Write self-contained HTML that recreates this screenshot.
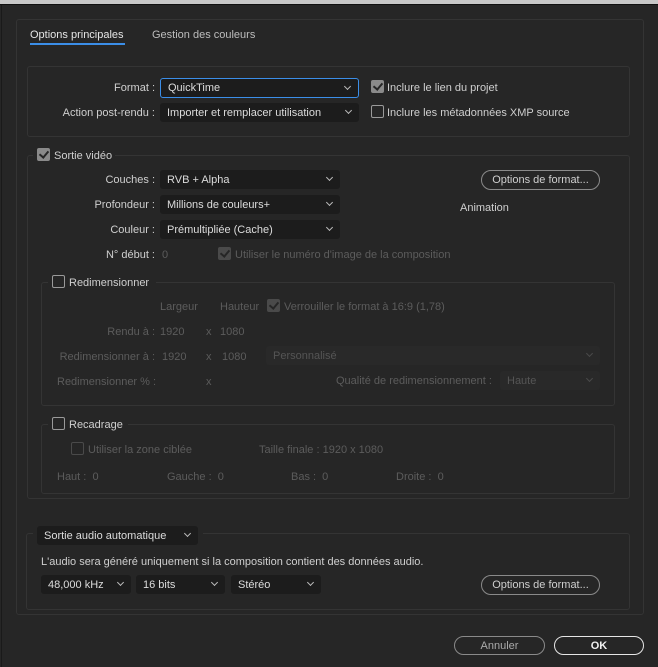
<!DOCTYPE html>
<html><head><meta charset="utf-8"><style>
*{box-sizing:border-box;margin:0;padding:0}
body{width:658px;height:667px;background:#262626;font-family:"Liberation Sans",sans-serif;font-size:11px;color:#cfcfcf;position:relative;overflow:hidden}
.a{position:absolute;white-space:nowrap}
.t{margin-top:1px}
.box{position:absolute;border:1px solid #343434;border-radius:3px}
.dd{position:absolute;background:#1c1c1c;border-radius:3px;padding-left:7px;line-height:20px;color:#dcdcdc}
.dd::after{content:"";position:absolute;right:8px;top:5px;width:4px;height:4px;border-right:1px solid #bbb;border-bottom:1px solid #bbb;transform:rotate(45deg)}
.dis{color:#5c5c5c}
.dd.dis{background:#292929;color:#555}
.dd.dis::after{border-color:#4a4a4a}
.cb{position:absolute;width:13px;height:13px;border:1.5px solid #9a9a9a;border-radius:2px}
.cb.on{background:#8a8a8a;border-color:#8a8a8a}
.cb.on::after{content:"";position:absolute;left:3px;top:0px;width:4px;height:7px;border-right:2px solid #262626;border-bottom:2px solid #262626;transform:rotate(40deg)}
.cb.dis{border-color:#4a4a4a}
.cb.on.dis{background:#4a4a4a}
.btn{position:absolute;border:1.5px solid #8a8a8a;border-radius:10px;text-align:center;line-height:18px;color:#cfcfcf}
.r{text-align:right}
.lg{background:#262626;padding:0 4px}
</style></head><body>
<div class="a" style="left:0;top:0;width:658px;height:4px;background:#c8c8c8"></div>
<div class="a" style="left:0;top:4px;width:658px;height:1px;background:#111"></div>
<div class="a" style="left:1px;top:5px;width:1px;height:662px;background:#1a1a1a"></div>
<div class="box" style="left:16px;top:19px;width:628px;height:596px"></div>
<div class="a t" style="left:30px;top:28px;color:#e6e6e6">Options principales</div>
<div class="a" style="left:30px;top:43px;width:95px;height:2px;background:#3b8ee8"></div>
<div class="a t" style="left:152px;top:28px;color:#bdbdbd">Gestion des couleurs</div>

<div class="box" style="left:27px;top:66px;width:603px;height:71px"></div>
<div class="a r t" style="left:60px;width:95px;top:81px">Format :</div>
<div class="dd" style="left:160px;top:78px;width:199px;height:20px;border:1px solid #3b8ee8;line-height:19px">QuickTime</div>
<div class="a r t" style="left:20px;width:135px;top:106px">Action post-rendu :</div>
<div class="dd" style="left:160px;top:103px;width:199px;height:19px">Importer et remplacer utilisation</div>
<div class="cb on" style="left:371px;top:80px"></div><div class="a t" style="left:387px;top:81px">Inclure le lien du projet</div>
<div class="cb" style="left:371px;top:105px"></div><div class="a t" style="left:387px;top:106px">Inclure les métadonnées XMP source</div>

<div class="box" style="left:27px;top:155px;width:603px;height:344px"></div>
<div class="a lg" style="left:33px;top:147px;height:16px;width:82px"></div>
<div class="cb on" style="left:37px;top:148px"></div><div class="a t" style="left:54px;top:149px">Sortie vidéo</div>
<div class="a r t" style="left:60px;width:95px;top:173px">Couches :</div>
<div class="dd" style="left:160px;top:170px;width:180px;height:19px">RVB + Alpha</div>
<div class="a r t" style="left:60px;width:95px;top:198px">Profondeur :</div>
<div class="dd" style="left:160px;top:195px;width:180px;height:19px">Millions de couleurs+</div>
<div class="a r t" style="left:60px;width:95px;top:223px">Couleur :</div>
<div class="dd" style="left:160px;top:220px;width:180px;height:19px">Prémultipliée (Cache)</div>
<div class="btn" style="left:481px;top:170px;width:119px;height:20px">Options de format...</div>
<div class="a t" style="left:460px;top:201px">Animation</div>
<div class="a r t" style="left:60px;width:95px;top:248px">N° début :</div>
<div class="a dis t" style="left:162px;top:248px">0</div>
<div class="cb on dis" style="left:218px;top:247px"></div><div class="a dis t" style="left:235px;top:248px">Utiliser le numéro d'image de la composition</div>

<div class="box" style="left:41px;top:282px;width:574px;height:124px"></div>
<div class="a lg" style="left:48px;top:274px;height:16px;width:108px"></div>
<div class="cb" style="left:52px;top:275px"></div><div class="a t" style="left:69px;top:276px">Redimensionner</div>
<div class="a dis t" style="left:160px;top:300px">Largeur</div>
<div class="a dis t" style="left:220px;top:300px">Hauteur</div>
<div class="cb on dis" style="left:267px;top:299px"></div><div class="a dis t" style="left:284px;top:300px">Verrouiller le format à 16:9 (1,78)</div>
<div class="a r dis t" style="left:60px;width:95px;top:325px">Rendu à :</div>
<div class="a dis t" style="left:160px;top:325px">1920</div><div class="a dis t" style="left:206px;top:325px">x</div><div class="a dis t" style="left:220px;top:325px">1080</div>
<div class="a r dis t" style="left:40px;width:115px;top:350px">Redimensionner à :</div>
<div class="a dis t" style="left:162px;top:350px">1920</div><div class="a dis t" style="left:206px;top:350px">x</div><div class="a dis t" style="left:222px;top:350px">1080</div>
<div class="dd dis" style="left:266px;top:346px;width:334px;height:19px">Personnalisé</div>
<div class="a dis t" style="left:57px;top:375px">Redimensionner % :</div>
<div class="a dis t" style="left:206px;top:375px">x</div>
<div class="a dis t" style="left:336px;top:374px">Qualité de redimensionnement :</div>
<div class="dd dis" style="left:500px;top:371px;width:100px;height:19px">Haute</div>

<div class="box" style="left:41px;top:424px;width:574px;height:70px"></div>
<div class="a lg" style="left:48px;top:416px;height:16px;width:80px"></div>
<div class="cb" style="left:52px;top:417px"></div><div class="a t" style="left:69px;top:418px">Recadrage</div>
<div class="cb dis" style="left:71px;top:442px"></div><div class="a dis t" style="left:88px;top:443px">Utiliser la zone ciblée</div>
<div class="a dis t" style="left:259px;top:443px">Taille finale : 1920 x 1080</div>
<div class="a dis t" style="left:57px;top:470px">Haut :&nbsp; 0</div>
<div class="a dis t" style="left:167px;top:470px">Gauche :&nbsp; 0</div>
<div class="a dis t" style="left:291px;top:470px">Bas :&nbsp; 0</div>
<div class="a dis t" style="left:396px;top:470px">Droite :&nbsp; 0</div>

<div class="box" style="left:26px;top:533px;width:604px;height:77px"></div>
<div class="a lg" style="left:33px;top:525px;height:22px;width:170px"></div>
<div class="dd" style="left:37px;top:526px;width:161px;height:19px">Sortie audio automatique</div>
<div class="a t" style="left:41px;top:555px">L'audio sera généré uniquement si la composition contient des données audio.</div>
<div class="dd" style="left:41px;top:575px;width:90px;height:19px">48,000 kHz</div>
<div class="dd" style="left:136px;top:575px;width:89px;height:19px">16 bits</div>
<div class="dd" style="left:231px;top:575px;width:90px;height:19px">Stéréo</div>
<div class="btn" style="left:481px;top:575px;width:119px;height:20px">Options de format...</div>

<div class="btn" style="left:454px;top:636px;width:91px;height:19px;color:#aaa">Annuler</div>
<div class="btn" style="left:554px;top:636px;width:90px;height:19px;border-color:#e6e6e6;color:#f0f0f0;font-weight:bold">OK</div>
</body></html>
